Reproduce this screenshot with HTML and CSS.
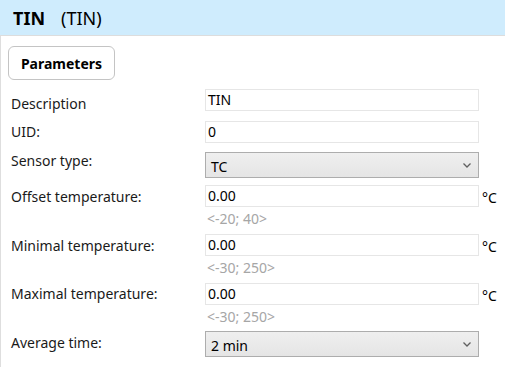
FILE: index.html
```html
<!DOCTYPE html>
<html lang="en">
<head>
    <meta charset="UTF-8">
    <meta name="viewport" content="width=device-width, initial-scale=1.0">
    <title>TIN - Parameters</title>
    <link rel="stylesheet" href="styles.css">
</head>
<body>

    <header class="title-bar">
        <span class="title-name">TIN</span>
        <span class="title-id">(TIN)</span>
    </header>

    <main class="panel">
        <button class="tab-button">Parameters</button>

        <div class="form">
            <div class="row">
                <div class="field-label label-low">Description</div>
                <div class="field"><div class="text-box">TIN</div></div>
            </div>

            <div class="row row-before-select">
                <div class="field-label">UID:</div>
                <div class="field"><div class="text-box">0</div></div>
            </div>

            <div class="row row-select">
                <div class="field-label label-up">Sensor type:</div>
                <div class="field">
                    <div class="combo">
                        <span>TC</span>
                        <svg class="chevron" width="8" height="5" viewBox="0 0 8 5"><path d="M0.5 0.5 L4 4 L7.5 0.5" fill="none" stroke="#606060" stroke-width="1.3"/></svg>
                    </div>
                </div>
            </div>

            <div class="row row-range">
                <div class="field-label label-mid">Offset temperature:</div>
                <div class="field">
                    <div class="text-box">0.00</div>
                    <div class="hint">&lt;-20; 40&gt;</div>
                </div>
                <div class="unit">°C</div>
            </div>

            <div class="row row-range">
                <div class="field-label label-mid">Minimal temperature:</div>
                <div class="field">
                    <div class="text-box">0.00</div>
                    <div class="hint">&lt;-30; 250&gt;</div>
                </div>
                <div class="unit">°C</div>
            </div>

            <div class="row row-range-last">
                <div class="field-label">Maximal temperature:</div>
                <div class="field">
                    <div class="text-box">0.00</div>
                    <div class="hint">&lt;-30; 250&gt;</div>
                </div>
                <div class="unit">°C</div>
            </div>

            <div class="row row-last">
                <div class="field-label label-mid">Average time:</div>
                <div class="field">
                    <div class="combo">
                        <span>2 min</span>
                        <svg class="chevron" width="8" height="5" viewBox="0 0 8 5"><path d="M0.5 0.5 L4 4 L7.5 0.5" fill="none" stroke="#606060" stroke-width="1.3"/></svg>
                    </div>
                </div>
            </div>
        </div>
    </main>

</body>
</html>
```

FILE: styles.css
```css
body {
    font-family: 'Noto Sans', 'Open Sans', sans-serif;
    font-size: 14px;
    color: #1a1a1a;
    background-color: #ffffff;
    margin: 0;
    padding: 0;
    overflow: hidden;
}

.title-bar {
    height: 35px;
    background-color: #cfecfd;
    border-bottom: 1px solid #dddddd;
    display: flex;
    align-items: center;
    padding-left: 13px;
    color: #000000;
}

.title-name {
    font-size: 18px;
    font-weight: bold;
    margin-right: 16px;
}

.title-id {
    font-size: 18px;
}

.panel {
    border-left: 1px solid #dedede;
    padding: 10px 0 10px 7px;
}

.tab-button {
    display: block;
    font-family: inherit;
    font-size: 14px;
    font-weight: bold;
    color: #000000;
    background-color: #ffffff;
    border: 1px solid #c4c4c4;
    border-radius: 6px;
    width: 107px;
    height: 34px;
    padding: 0;
}

.form {
    margin-top: 9px;
    padding-left: 3px;
}

.row {
    display: grid;
    grid-template-columns: 194px 274px auto;
    align-items: start;
    margin-bottom: 10px;
}

.row-before-select {
    margin-bottom: 9px;
}

.row-range {
    margin-bottom: 7px;
}

.row-range-last {
    margin-bottom: 6px;
}

.row-select {
    margin-bottom: 7px;
}

.row-last {
    margin-bottom: 0;
}

/* labels never set the row height, the field does */
.field-label {
    line-height: 20px;
    margin-top: 1px;
    margin-bottom: -8px;
}

.label-low {
    margin-top: 5px;
}

.label-up {
    margin-top: -1px;
}

.label-mid {
    margin-top: 2px;
}

.text-box {
    height: 20px;
    line-height: 20px;
    border: 1px solid #e6e6e6;
    padding-left: 2px;
    color: #000000;
}

.hint {
    font-size: 14px;
    color: #a6a6a6;
    line-height: 17px;
    padding-top: 3px;
    padding-left: 2px;
}

.unit {
    padding-left: 3px;
    line-height: 22px;
    padding-top: 2px;
    color: #000000;
}

.combo {
    height: 24px;
    border: 1px solid #adadad;
    background: linear-gradient(#efefef, #e5e5e5);
    display: flex;
    align-items: center;
    justify-content: space-between;
    padding: 0 7px 0 5px;
    color: #000000;
}

.combo span {
    padding-top: 2px;
}

.chevron {
    display: block;
}
```
